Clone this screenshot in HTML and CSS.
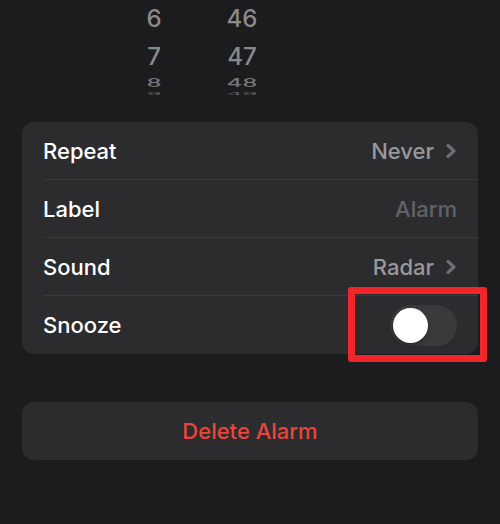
FILE: index.html
```html
<!DOCTYPE html>
<html lang="en">
<head>
  <meta charset="UTF-8">
  <meta name="viewport" content="width=device-width, initial-scale=1.0">
  <title>Edit Alarm</title>
  <link rel="stylesheet" href="styles.css">
</head>
<body>

  <div class="picker">
    <div class="wheel-row row-a"><span class="hour">6</span><span class="minute">46</span></div>
    <div class="wheel-row row-b"><span class="hour">7</span><span class="minute">47</span></div>
    <div class="wheel-row row-c"><span class="hour">8</span><span class="minute">48</span></div>
    <div class="wheel-row row-d"><span class="hour">9</span><span class="minute">49</span></div>
  </div>

  <div class="card">
    <div class="item">
      <div class="item-inner">
        <span class="label">Repeat</span>
        <span class="value">Never
          <svg class="chevron" width="12" height="14" viewBox="0 0 12 14"><path d="M3 1.5 L9 7 L3 12.5" /></svg>
        </span>
      </div>
    </div>
    <div class="item">
      <div class="item-inner">
        <span class="label">Label</span>
        <span class="value placeholder">Alarm</span>
      </div>
    </div>
    <div class="item">
      <div class="item-inner">
        <span class="label">Sound</span>
        <span class="value">Radar
          <svg class="chevron" width="12" height="14" viewBox="0 0 12 14"><path d="M3 1.5 L9 7 L3 12.5" /></svg>
        </span>
      </div>
    </div>
    <div class="item last">
      <div class="item-inner">
        <span class="label">Snooze</span>
        <span class="switch-wrap">
          <span class="switch"><span class="knob"></span></span>
          <span class="highlight"></span>
        </span>
      </div>
    </div>
  </div>

  <div class="delete">Delete Alarm</div>

</body>
</html>
```

FILE: styles.css
```css
body {
  margin: 0;
  background: #1c1c1e;
  font-family: Inter, "Liberation Sans", sans-serif;
  color: #fff;
  width: 500px;
  height: 524px;
  overflow: hidden;
}
.picker {
  height: 100px;
  overflow: hidden;
  padding-top: 5px;
  box-sizing: border-box;
}
.wheel-row {
  display: flex;
  font-size: 24px;
  font-weight: 500;
  color: #8a8a8c;
  line-height: 28px;
}
.wheel-row .hour {
  width: 60px;
  margin-left: 124px;
  text-align: center;
}
.wheel-row .minute {
  width: 60px;
  margin-left: 28px;
  text-align: center;
}
.row-b {
  margin-top: 10px;
}
.row-c {
  margin-top: -2px;
  transform: scaleY(0.5);
  color: #76767a;
}
.row-d {
  margin-top: -17px;
  transform: scaleY(0.15);
  color: #5a5a5c;
}
.card {
  margin: 22px 22px 0;
  background: #2c2c2e;
  border-radius: 12px;
}
.item {
  padding-left: 21px;
}
.item-inner {
  height: 58px;
  display: flex;
  align-items: center;
  justify-content: space-between;
  padding-right: 21px;
  border-bottom: 1px solid #3a3a3c;
  box-sizing: border-box;
}
.item.last .item-inner {
  border-bottom: none;
}
.label {
  font-size: 22px;
  font-weight: 500;
}
.value {
  font-size: 22px;
  font-weight: 500;
  color: #98989d;
  display: flex;
  align-items: center;
}
.value.placeholder {
  color: #636366;
}
.chevron {
  margin-left: 11px;
  fill: none;
  stroke: #6d6d72;
  stroke-width: 3.2;
  stroke-linecap: round;
  stroke-linejoin: round;
}
.switch-wrap {
  position: relative;
  display: block;
}
.switch {
  display: block;
  width: 67px;
  height: 41px;
  border-radius: 21px;
  background: #3a3a3d;
  position: relative;
}
.knob {
  position: absolute;
  left: 3px;
  top: 3px;
  width: 35px;
  height: 35px;
  border-radius: 50%;
  background: #fff;
  box-shadow: 0 2px 4px rgba(0,0,0,0.3);
}
.highlight {
  position: absolute;
  left: -42px;
  top: -18px;
  width: 139px;
  height: 75px;
  border: 7px solid #f0262b;
  border-radius: 3px;
  box-sizing: border-box;
}
.delete {
  margin: 48px 22px 0;
  height: 58px;
  background: #2c2c2e;
  border-radius: 12px;
  display: flex;
  align-items: center;
  justify-content: center;
  font-size: 22px;
  font-weight: 500;
  color: #e9463b;
}
```
